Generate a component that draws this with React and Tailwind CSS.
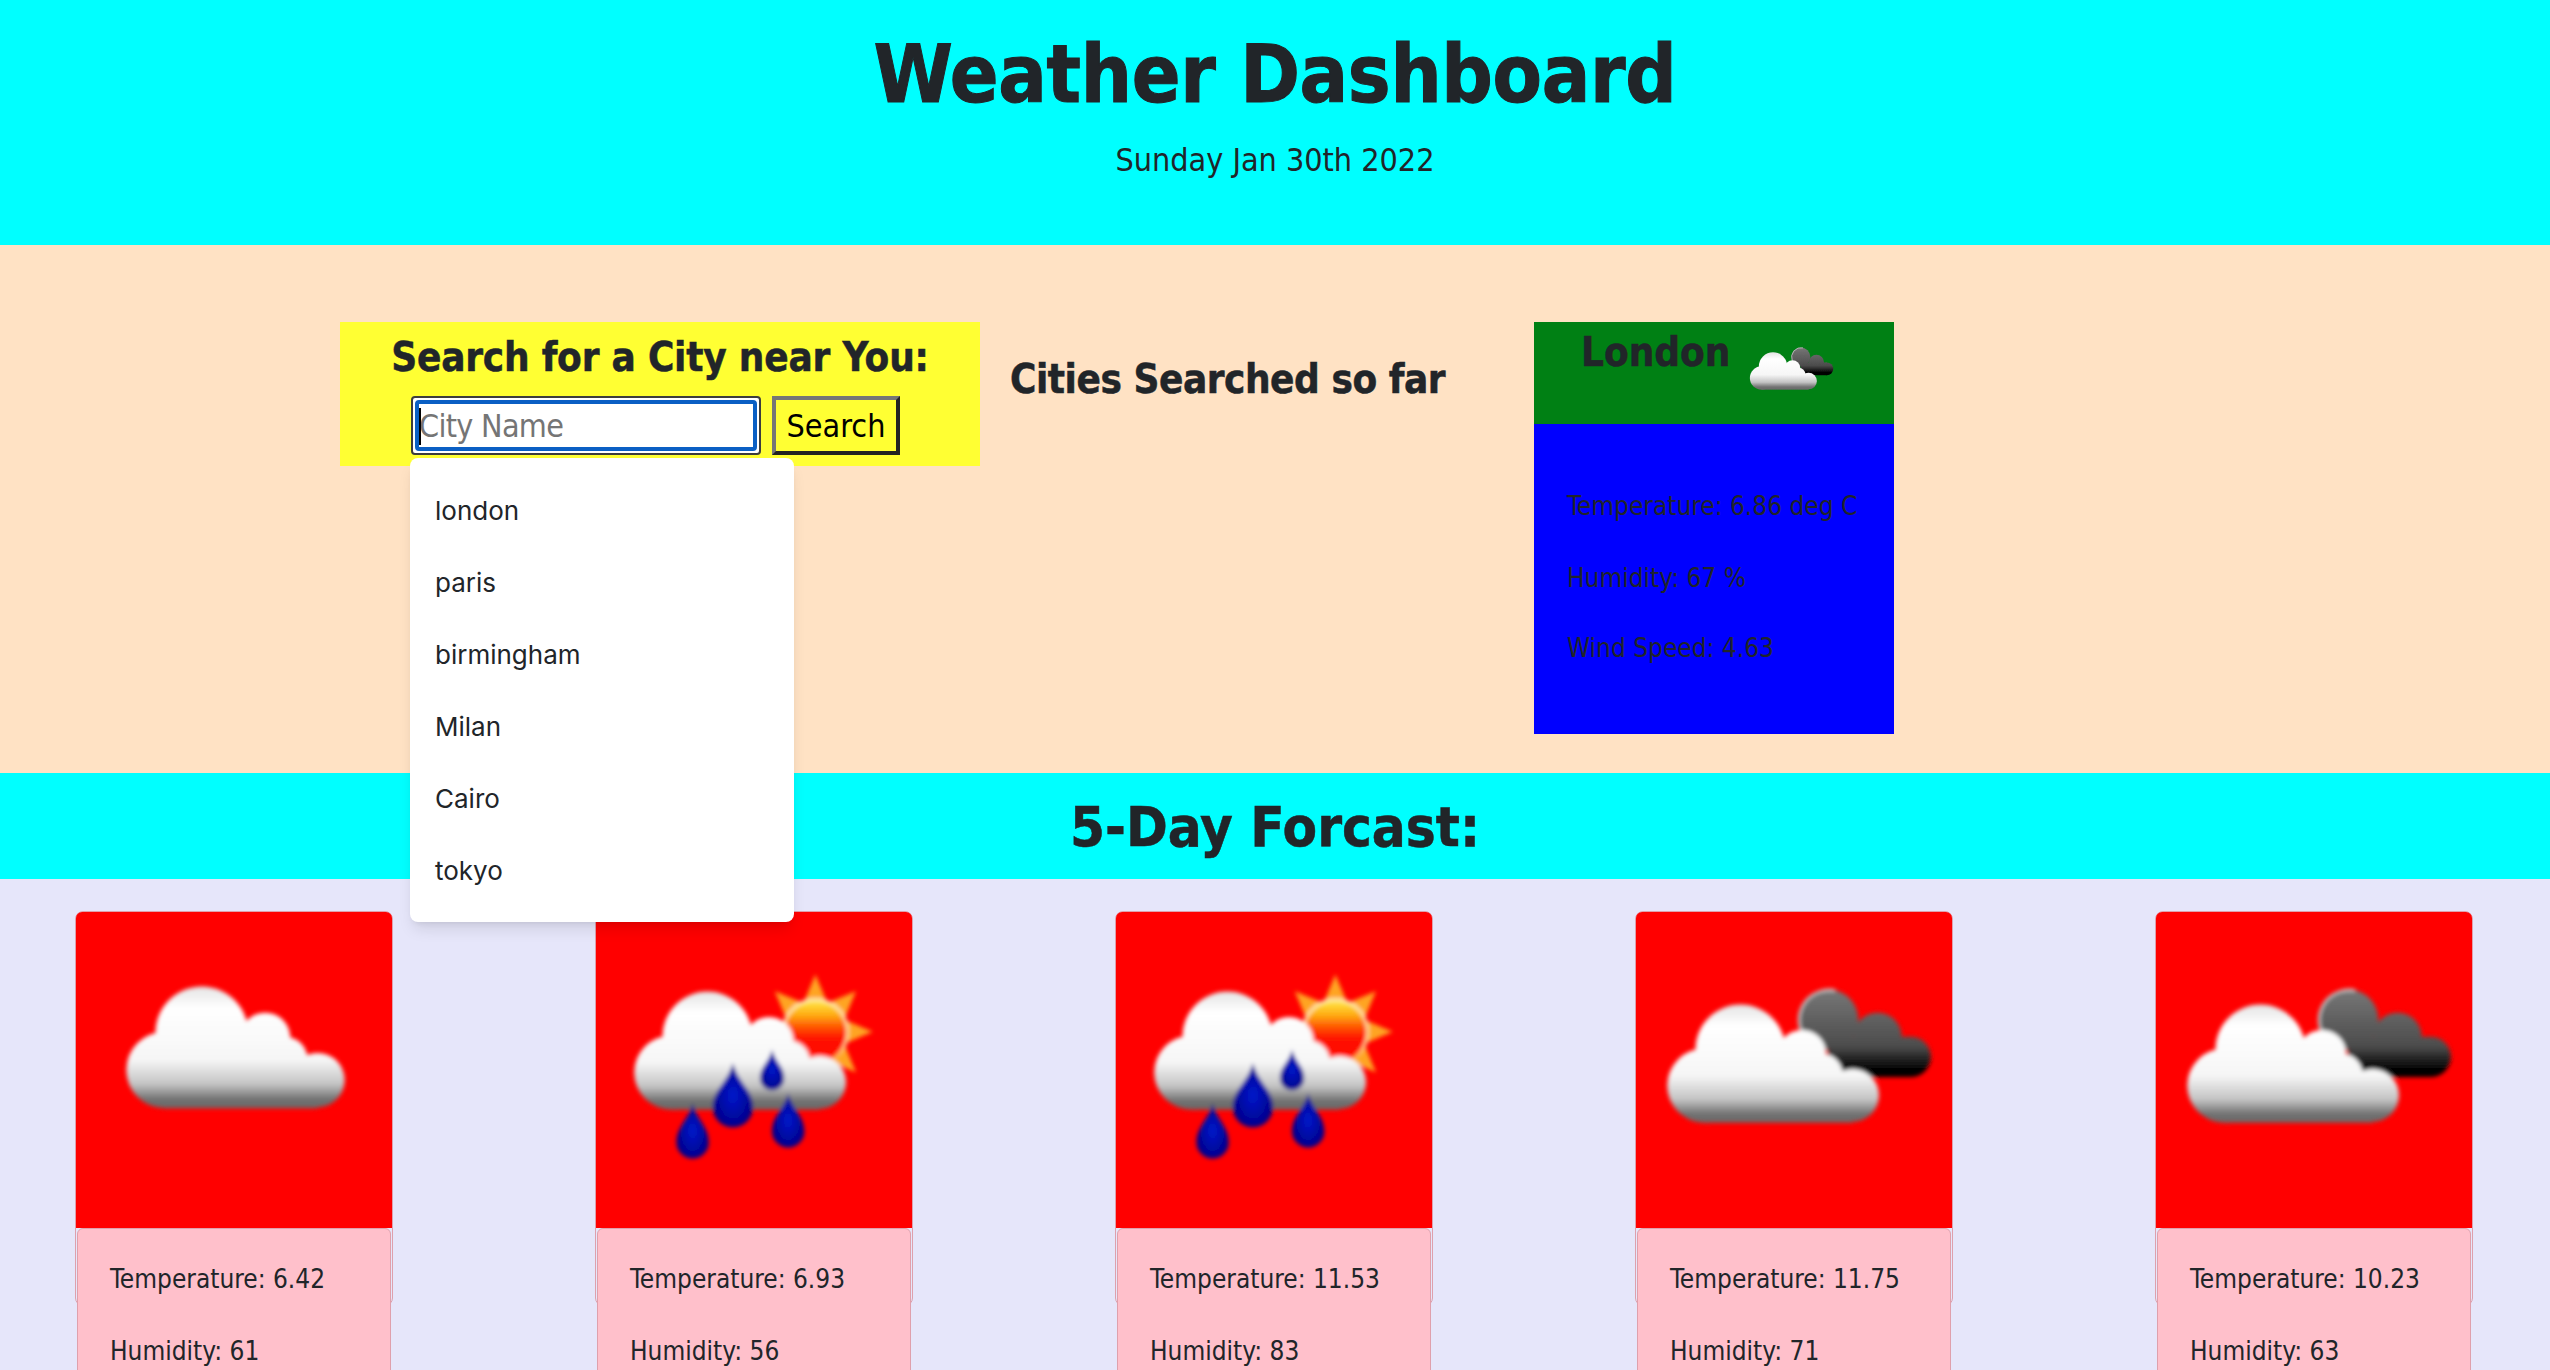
import React from "react";

const heading = "font-['DejaVu_Sans'] [font-stretch:condensed] font-bold text-[#212529]";
const body = "font-['DejaVu_Sans'] [font-stretch:condensed] text-[#212529]";

const cities = ["london", "paris", "birmingham", "Milan", "Cairo", "tokyo"];

const forecast = [
  { icon: "cloud", temp: "6.42", humidity: "61" },
  { icon: "rain", temp: "6.93", humidity: "56" },
  { icon: "rain", temp: "11.53", humidity: "83" },
  { icon: "dark", temp: "11.75", humidity: "71" },
  { icon: "dark", temp: "10.23", humidity: "63" },
];

const sunRays = Array.from({ length: 16 }, (_, i) => {
  const r = i % 2 === 0 ? 57 : 31;
  const a = (i * Math.PI) / 8 - Math.PI / 2;
  return `${218 + r * Math.cos(a)},${119 + r * Math.sin(a)}`;
}).join(" ");

const dropPath = (x, y, w, h) =>
  `M${x},${y} C${x + w * 0.12},${y + h * 0.3} ${x + w / 2},${y + h * 0.42} ${x + w / 2},${y + h - w / 2} A${w / 2},${w / 2} 0 0 1 ${x - w / 2},${y + h - w / 2} C${x - w / 2},${y + h * 0.42} ${x - w * 0.12},${y + h * 0.3} ${x},${y} Z`;

// white cloud, local box is about 216x121
const Cloud = ({ x, y, scale = 1 }) => (
  <g transform={`translate(${x} ${y}) scale(${scale})`} fill="url(#cloudFill)">
    <circle cx="75" cy="46" r="46" />
    <circle cx="138" cy="51" r="25" />
    <circle cx="158" cy="72" r="22" />
    <circle cx="38" cy="83" r="38" />
    <circle cx="190" cy="93" r="27" />
    <rect x="38" y="80" width="152" height="41" />
    <rect x="75" y="50" width="70" height="50" />
  </g>
);

const WeatherIcon = ({ type, className }) => (
  <svg viewBox="0 0 314 314" className={className}>
    <defs>
      <filter id="soft" x="-10%" y="-10%" width="120%" height="120%">
        <feGaussianBlur stdDeviation="2" />
      </filter>
      <linearGradient id="cloudFill" gradientUnits="userSpaceOnUse" x1="0" y1="0" x2="0" y2="121">
        <stop offset="0" stopColor="#e4e4e4" />
        <stop offset="0.18" stopColor="#ffffff" />
        <stop offset="0.6" stopColor="#f6f6f6" />
        <stop offset="0.8" stopColor="#c4c4c4" />
        <stop offset="0.93" stopColor="#707070" />
        <stop offset="1" stopColor="#6a6a6a" />
      </linearGradient>
      <linearGradient id="darkFill" gradientUnits="userSpaceOnUse" x1="0" y1="77" x2="0" y2="164">
        <stop offset="0" stopColor="#777777" />
        <stop offset="0.65" stopColor="#4c4c4c" />
        <stop offset="0.92" stopColor="#000000" />
        <stop offset="1" stopColor="#000000" />
      </linearGradient>
      <linearGradient id="sunFill" x1="0" y1="0" x2="0" y2="1">
        <stop offset="0.05" stopColor="#ffe040" />
        <stop offset="0.25" stopColor="#ffa810" />
        <stop offset="0.42" stopColor="#ff5804" />
        <stop offset="0.6" stopColor="#ff1400" />
        <stop offset="1" stopColor="#ff0000" />
      </linearGradient>
      <linearGradient id="sunRing" x1="0" y1="0" x2="0" y2="1">
        <stop offset="0" stopColor="#fff0c0" />
        <stop offset="0.7" stopColor="#ffe0a0" />
        <stop offset="1" stopColor="#ffa030" />
      </linearGradient>
      <radialGradient id="dropFill">
        <stop offset="0" stopColor="#0018cc" />
        <stop offset="1" stopColor="#00008c" />
      </radialGradient>
    </defs>
    <g filter="url(#soft)">
      {type === "cloud" && <Cloud x={50} y={74} />}
      {type === "rain" && (
        <>
          <polygon points={sunRays} fill="#ffa424" />
          <circle cx="218" cy="119" r="32" fill="url(#sunFill)" stroke="url(#sunRing)" strokeWidth="2.5" />
          <Cloud x={38} y={79} scale={0.97} />
          <path d={dropPath(136, 150, 40, 64)} fill="url(#dropFill)" />
          <path d={dropPath(175, 137, 24, 40)} fill="url(#dropFill)" />
          <path d={dropPath(191, 180, 32, 54)} fill="url(#dropFill)" />
          <path d={dropPath(96, 190, 32, 55)} fill="url(#dropFill)" />
        </>
      )}
      {type === "dark" && (
        <>
          <g fill="url(#darkFill)">
            <circle cx="191" cy="107" r="30" />
            <circle cx="240" cy="124" r="24" />
            <circle cx="273" cy="144" r="20" />
            <rect x="191" y="124" width="82" height="40" />
          </g>
          <path d="M164,118 A30,30 0 0 1 198,78" fill="none" stroke="#c8c8c8" strokeWidth="2.5" />
          <Cloud x={31} y={92} scale={0.97} />
        </>
      )}
    </g>
  </svg>
);

const ForecastCard = ({ icon, temp, humidity }) => (
  <div className="w-[318px] h-[395px] shrink-0 border border-[#dfa0ac] rounded-lg">
    <div className="h-[316px] bg-[#ff0000] rounded-t-md">
      <WeatherIcon type={icon} className="w-[316px] h-[316px]" />
    </div>
    <div className={`h-[160px] mx-px bg-[#ffc0cb] border border-[#dfa0ac] rounded-t-md px-[32px] pt-[30px] text-[26px] leading-[40px] ${body}`}>
      <p className="mb-[32px]">Temperature: {temp}</p>
      <p>Humidity: {humidity}</p>
    </div>
  </div>
);

export default function App() {
  return (
    <div className="h-[1370px] overflow-hidden flex flex-col bg-[#e6e6fa]">
      <header className="h-[245px] shrink-0 bg-[#00ffff] text-center pt-[27px]">
        <h1 className={`text-[80px] leading-[96px] tracking-[-0.3px] [-webkit-text-stroke:1px_#212529] ${heading}`}>Weather Dashboard</h1>
        <p className={`mt-[13px] text-[32px] leading-[48px] ${body}`}>Sunday Jan 30th 2022</p>
      </header>

      <section className="h-[528px] shrink-0 bg-[#ffe2c4] pt-[77px] pl-[340px] flex items-start">
        <div className="relative w-[640px] h-[144px] bg-[#ffff33] text-center pt-[11px]">
          <h3 className={`text-[40px] leading-[48px] tracking-[-0.2px] [-webkit-text-stroke:0.5px_#212529] ${heading}`}>Search for a City near You:</h3>
          <div className="flex mt-[15px] ml-[71px] gap-[11px]">
            <div className="relative w-[350px] h-[59px] border-2 border-[#3d3d3d] rounded-[4px] bg-white p-[2px]">
              <input
                readOnly
                placeholder="City Name"
                className={`w-full h-full border-[4px] border-[#0a5fc4] rounded-[4px] bg-white text-[32px] tracking-[-0.7px] outline-none placeholder:text-[#757575] ${body}`}
              />
              <div className="absolute left-[6px] top-[10px] w-[2px] h-[37px] bg-black" />
            </div>
            <button className={`w-[128px] h-[59px] border-[4px] border-t-[#767676] border-l-[#767676] border-r-[#222222] border-b-[#222222] bg-[#ffff33] text-[32px] !text-black ${body}`}>
              Search
            </button>
          </div>
          <ul className="absolute z-10 left-[70px] top-[136px] w-[384px] h-[464px] bg-white rounded-lg shadow-lg pt-[16px] text-left font-['Inter',sans-serif] text-[26px] text-[#212529]">
            {cities.map((city) => (
              <li key={city} className="h-[72px] flex items-center pl-[25px]">
                {city}
              </li>
            ))}
          </ul>
        </div>

        <h3 className={`ml-[30px] mt-[33px] text-[40px] leading-[48px] tracking-[-0.45px] [-webkit-text-stroke:0.5px_#212529] ${heading}`}>Cities Searched so far</h3>

        <div className="ml-auto mr-[656px] w-[360px] h-[412px]">
          <div className="h-[102px] bg-[#008014] flex items-start pl-[47px]">
            <h3 className={`mt-[6px] text-[40px] leading-[48px] [-webkit-text-stroke:0.5px_#212529] ${heading}`}>London</h3>
            <WeatherIcon type="dark" className="ml-[10px] mt-px w-[100px] h-[100px]" />
          </div>
          <div className={`h-[310px] bg-[#0000ff] pl-[33px] pt-[62px] text-[26px] leading-[40px] ${body}`}>
            <p className="mb-[32px]">Temperature: 6.86 deg C</p>
            <p className="mb-[30px]">Humidity: 67 %</p>
            <p>Wind Speed: 4.63</p>
          </div>
        </div>
      </section>

      <section className="h-[106px] shrink-0 bg-[#00ffff] flex items-center justify-center">
        <h2 className={`text-[56px] leading-[67px] [-webkit-text-stroke:0.5px_#212529] ${heading}`}>5-Day Forcast:</h2>
      </section>

      <section className="flex-1 flex gap-[202px] pl-[75px] pt-[32px]">
        {forecast.map((day, i) => (
          <ForecastCard key={i} {...day} />
        ))}
      </section>
    </div>
  );
}
